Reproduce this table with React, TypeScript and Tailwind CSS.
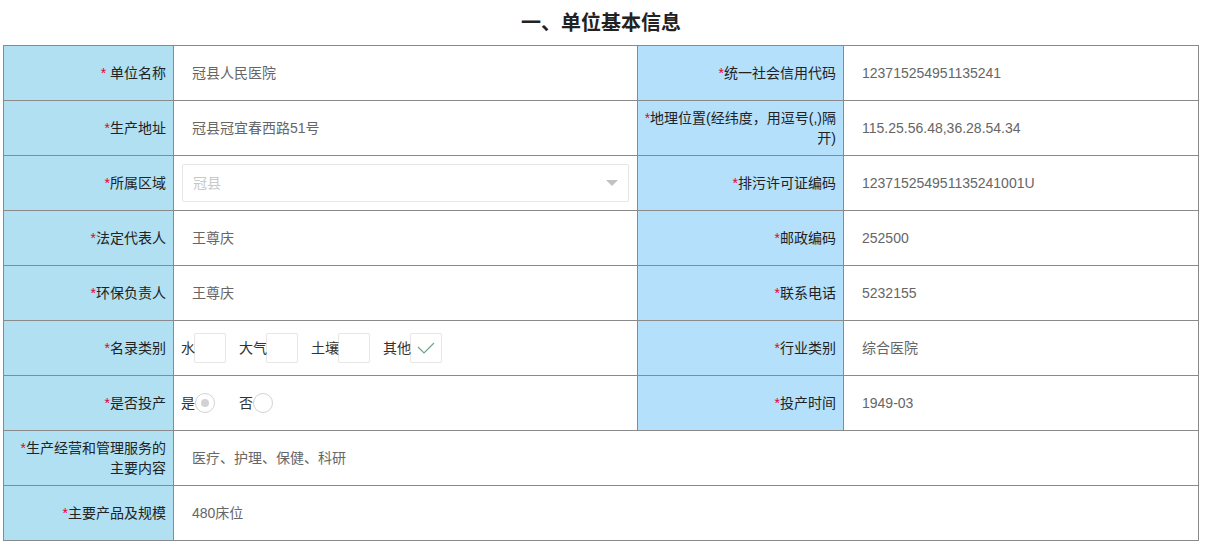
import React from 'react';

const font = { fontFamily: '"Liberation Sans", "Noto Sans CJK SC", sans-serif' };

function Star() {
    return <span className='text-[#e4002b]'>*</span>;
}

function Label({ children, side }: { children: React.ReactNode; side: 'l' | 'r' }) {
    return (
        <td
            className={
                'border border-[#8a8a8a] text-right pr-[7px] pl-[4px] leading-[20px] text-[14px] text-[#222] ' +
                (side === 'l' ? 'bg-[#b0e0f2]' : 'bg-[#b4e0fc]')
            }
        >
            {children}
        </td>
    );
}

function Value({ children, colSpan }: { children: React.ReactNode; colSpan?: number }) {
    return (
        <td colSpan={colSpan} className='border border-[#8a8a8a] pl-[18px] text-[14px] text-[#666]'>
            {children}
        </td>
    );
}

function Check({ label, checked }: { label: string; checked?: boolean }) {
    return (
        <div className='flex items-center'>
            <span className='text-[14px] text-[#333] relative z-10'>{label}</span>
            <span className='w-[32px] h-[30px] -ml-[1px] border border-[#e6e6e6] rounded-[2px] flex items-center justify-center'>
                {checked && (
                    <svg width='18' height='12' viewBox='0 0 18 12'>
                        <polyline points='1,5 7,11 17,1' fill='none' stroke='#6aa58a' strokeWidth='1.2' />
                    </svg>
                )}
            </span>
        </div>
    );
}

function Radio({ label, checked }: { label: string; checked?: boolean }) {
    return (
        <div className='flex items-center'>
            <span className='text-[14px] text-[#333]'>{label}</span>
            <span className='w-[20px] h-[20px] rounded-full border border-[#d2d2d2] flex items-center justify-center'>
                {checked && <span className='w-[8px] h-[8px] rounded-full bg-[#d2d2d2]' />}
            </span>
        </div>
    );
}

function App() {
    return (
        <div className='ml-[3px] w-[1196px] bg-white' style={font}>
            <div className='h-[45px] flex items-center justify-center'>
                <h1 className='text-[20px] font-bold text-[#222]'>一、单位基本信息</h1>
            </div>

            <table className='w-[1195px] table-fixed border-collapse border border-[#333]'>
                <colgroup>
                    <col className='w-[170px]' />
                    <col className='w-[464px]' />
                    <col className='w-[206px]' />
                    <col className='w-[355px]' />
                </colgroup>
                <tbody>
                    <tr className='h-[55px]'>
                        <Label side='l'><Star /> 单位名称</Label>
                        <Value>冠县人民医院</Value>
                        <Label side='r'><Star />统一社会信用代码</Label>
                        <Value>123715254951135241</Value>
                    </tr>
                    <tr className='h-[55px]'>
                        <Label side='l'><Star />生产地址</Label>
                        <Value>冠县冠宜春西路51号</Value>
                        <Label side='r'>
                            <span className='whitespace-nowrap'><Star />地理位置(经纬度，用逗号(,)隔</span>
                            <br />
                            开)
                        </Label>
                        <Value>115.25.56.48,36.28.54.34</Value>
                    </tr>
                    <tr className='h-[55px]'>
                        <Label side='l'><Star />所属区域</Label>
                        <td className='border border-[#8a8a8a] pl-[8px] pr-[8px]'>
                            <div className='h-[38px] border border-[#e6e6e6] rounded-[2px] flex items-center justify-between pl-[10px] pr-[10px]'>
                                <span className='text-[14px] text-[#c8c8c8]'>冠县</span>
                                <svg width='12' height='7' viewBox='0 0 12 7'>
                                    <polygon points='0,0 12,0 6,6' fill='#c2c2c2' />
                                </svg>
                            </div>
                        </td>
                        <Label side='r'><Star />排污许可证编码</Label>
                        <Value>123715254951135241001U</Value>
                    </tr>
                    <tr className='h-[55px]'>
                        <Label side='l'><Star />法定代表人</Label>
                        <Value>王尊庆</Value>
                        <Label side='r'><Star />邮政编码</Label>
                        <Value>252500</Value>
                    </tr>
                    <tr className='h-[55px]'>
                        <Label side='l'><Star />环保负责人</Label>
                        <Value>王尊庆</Value>
                        <Label side='r'><Star />联系电话</Label>
                        <Value>5232155</Value>
                    </tr>
                    <tr className='h-[55px]'>
                        <Label side='l'><Star />名录类别</Label>
                        <td className='border border-[#8a8a8a] pl-[7px]'>
                            <div className='flex items-center gap-[13px]'>
                                <Check label='水' />
                                <Check label='大气' />
                                <Check label='土壤' />
                                <Check label='其他' checked />
                            </div>
                        </td>
                        <Label side='r'><Star />行业类别</Label>
                        <Value>综合医院</Value>
                    </tr>
                    <tr className='h-[55px]'>
                        <Label side='l'><Star />是否投产</Label>
                        <td className='border border-[#8a8a8a] pl-[7px]'>
                            <div className='flex items-center gap-[24px]'>
                                <Radio label='是' checked />
                                <Radio label='否' />
                            </div>
                        </td>
                        <Label side='r'><Star />投产时间</Label>
                        <Value>1949-03</Value>
                    </tr>
                    <tr className='h-[55px]'>
                        <Label side='l'>
                            <span className='whitespace-nowrap'><Star />生产经营和管理服务的</span>
                            <br />
                            主要内容
                        </Label>
                        <Value colSpan={3}>医疗、护理、保健、科研</Value>
                    </tr>
                    <tr className='h-[55px]'>
                        <Label side='l'><Star />主要产品及规模</Label>
                        <Value colSpan={3}>480床位</Value>
                    </tr>
                </tbody>
            </table>
        </div>
    );
}

export default App;
